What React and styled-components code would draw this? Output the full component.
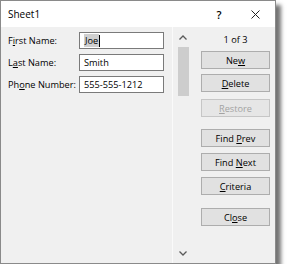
import styled, { createGlobalStyle } from "styled-components";

const GlobalStyle = createGlobalStyle`
  html, body {
    margin: 0;
    padding: 0;
    background: #ffffff;
  }
  body {
    font-family: "Open Sans", "Noto Sans", sans-serif;
  }
`;

const Dialog = styled.div`
  width: 276px;
  height: 264px;
  box-sizing: border-box;
  border: 1px solid #8a8a8a;
  background: #f0f0f0;
  display: flex;
  flex-direction: column;
  box-shadow: 5px 5px 4px rgba(0, 0, 0, 0.55);
  color: #000;
  font-size: 9.2px;
`;

const TitleBar = styled.div`
  height: 26px;
  flex: none;
  background: #ffffff;
  display: flex;
  align-items: center;
  padding: 0 0 0 7px;
  font-size: 10px;
`;

const Title = styled.span`
  flex: 1;
  padding-bottom: 1px;
`;

const HelpButton = styled.span`
  width: 22px;
  text-align: center;
  font-size: 11px;
  font-weight: 600;
  margin-right: 10px;
`;

const CloseIcon = styled.span`
  width: 30px;
  margin-right: 5px;
  display: flex;
  justify-content: center;
`;

const Body = styled.div`
  flex: 1;
  display: flex;
`;

const FormColumn = styled.div`
  width: 171px;
  padding: 5px 0 0 7px;
  box-sizing: border-box;
  display: grid;
  grid-template-columns: 71px 85px;
  grid-auto-rows: 17px;
  row-gap: 5px;
  align-content: start;
`;

const Label = styled.label`
  display: flex;
  align-items: center;
  white-space: pre;
`;

const Key = styled.span`
  text-decoration: underline;
  text-underline-offset: 1px;
`;

const Field = styled.div`
  box-sizing: border-box;
  border: 1px solid #7a7a7a;
  background: #ffffff;
  display: flex;
  align-items: center;
  padding-left: 4px;
`;

const Selected = styled.span`
  background: #cfcfcf;
  padding: 0 1px;
`;

const Caret = styled.span`
  width: 1px;
  height: 12px;
  background: #000;
`;

const ScrollColumn = styled.div`
  width: 19px;
  border-left: 1px solid #fafafa;
  display: flex;
  flex-direction: column;
  align-items: center;
`;

const ArrowBox = styled.div`
  height: 20px;
  width: 100%;
  display: flex;
  align-items: center;
  justify-content: center;
  flex: none;
`;

const Thumb = styled.div`
  width: 11px;
  height: 49px;
  background: #cdcdcd;
  margin-left: 1px;
  flex: none;
`;

const Track = styled.div`
  flex: 1;
`;

const ButtonColumn = styled.div`
  width: 69px;
  margin-left: 9px;
  display: flex;
  flex-direction: column;
`;

const Counter = styled.div`
  height: 24px;
  display: flex;
  align-items: center;
  justify-content: center;
  padding-top: 1px;
  box-sizing: border-box;
`;

const Button = styled.button`
  height: 18px;
  margin-top: ${(p) => p.$space}px;
  padding: 0;
  box-sizing: border-box;
  border: 1px solid ${(p) => (p.disabled ? "#c6c6c6" : "#adadad")};
  background: ${(p) => (p.disabled ? "#e6e6e6" : "#e1e1e1")};
  color: ${(p) => (p.disabled ? "#a3a3a3" : "#000")};
  font: inherit;
  white-space: pre;
  text-align: center;
`;

function Chevron({ up }) {
  return (
    <svg width="8" height="5" viewBox="0 0 8 5">
      <polyline
        points={up ? "0.5,4.5 4,1 7.5,4.5" : "0.5,0.5 4,4 7.5,0.5"}
        fill="none"
        stroke="#5a5a5a"
        strokeWidth="1.3"
      />
    </svg>
  );
}

const buttons = [
  { pre: "Ne", key: "w", post: "", space: 0 },
  { pre: "", key: "D", post: "elete", space: 5 },
  { pre: "", key: "R", post: "estore", space: 7, disabled: true },
  { pre: "Find ", key: "P", post: "rev", space: 12 },
  { pre: "Find ", key: "N", post: "ext", space: 6 },
  { pre: "", key: "C", post: "riteria", space: 6 },
  { pre: "Cl", key: "o", post: "se", space: 13 },
];

export default function App() {
  return (
    <>
      <GlobalStyle />
      <Dialog>
        <TitleBar>
          <Title>Sheet1</Title>
          <HelpButton>?</HelpButton>
          <CloseIcon>
            <svg width="9" height="9" viewBox="0 0 9 9">
              <path d="M0.5 0.5 L8.5 8.5 M8.5 0.5 L0.5 8.5" stroke="#222" strokeWidth="1" />
            </svg>
          </CloseIcon>
        </TitleBar>
        <Body>
          <FormColumn>
            <Label>
              F<Key>i</Key>rst Name:
            </Label>
            <Field>
              <Selected>Joe</Selected>
              <Caret />
            </Field>
            <Label>
              L<Key>a</Key>st Name:
            </Label>
            <Field>Smith</Field>
            <Label>
              Ph<Key>o</Key>ne Number:
            </Label>
            <Field>555-555-1212</Field>
          </FormColumn>
          <ScrollColumn>
            <ArrowBox>
              <Chevron up />
            </ArrowBox>
            <Thumb />
            <Track />
            <ArrowBox>
              <Chevron />
            </ArrowBox>
          </ScrollColumn>
          <ButtonColumn>
            <Counter>1 of 3</Counter>
            {buttons.map((b) => (
              <Button key={b.post + b.key} $space={b.space} disabled={b.disabled}>
                <span>
                  {b.pre}
                  <Key>{b.key}</Key>
                  {b.post}
                </span>
              </Button>
            ))}
          </ButtonColumn>
        </Body>
      </Dialog>
    </>
  );
}
